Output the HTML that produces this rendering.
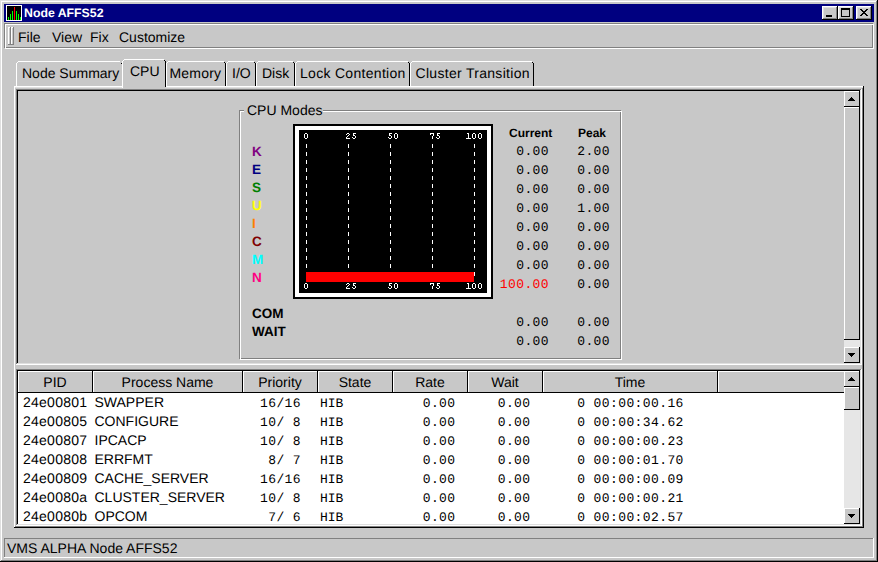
<!DOCTYPE html>
<html><head><meta charset="utf-8"><title>Node AFFS52</title>
<style>html,body{margin:0;padding:0;background:#c8c8c8;overflow:hidden;width:878px;height:562px} svg{display:block}</style>
</head><body>
<svg width="878" height="562" viewBox="0 0 878 562" shape-rendering="crispEdges" text-rendering="geometricPrecision"><rect x="0" y="0" width="878" height="562" fill="#c8c8c8"/>
<rect x="0" y="0" width="878" height="1" fill="#dfdfdf"/>
<rect x="0" y="0" width="1" height="562" fill="#dfdfdf"/>
<rect x="1" y="1" width="876" height="1" fill="#ffffff"/>
<rect x="1" y="1" width="1" height="560" fill="#ffffff"/>
<rect x="0" y="561" width="878" height="1" fill="#000000"/>
<rect x="877" y="0" width="1" height="562" fill="#000000"/>
<rect x="1" y="560" width="876" height="1" fill="#808080"/>
<rect x="876" y="1" width="1" height="560" fill="#808080"/>
<rect x="4" y="4" width="870" height="18" fill="#000080"/>
<rect x="6" y="5" width="16" height="16" fill="#ffffff"/>
<rect x="7" y="6" width="14" height="14" fill="#000000"/>
<rect x="8" y="17" width="1" height="3" fill="#00ff00"/>
<rect x="10" y="14" width="1" height="6" fill="#00ff00"/>
<rect x="12" y="11" width="1" height="9" fill="#00ff00"/>
<rect x="14" y="7" width="1" height="13" fill="#ff0000"/>
<rect x="16" y="11" width="1" height="9" fill="#00ff00"/>
<rect x="18" y="14" width="1" height="6" fill="#00ff00"/>
<rect x="20" y="17" width="1" height="3" fill="#00ff00"/>
<text x="24" y="17" font-family="Liberation Sans" font-size="12.3" font-weight="bold" fill="#ffffff" text-anchor="start" xml:space="preserve">Node AFFS52</text>
<rect x="822" y="6" width="16" height="14" fill="#c8c8c8"/>
<rect x="822" y="6" width="16" height="1" fill="#ffffff"/>
<rect x="822" y="6" width="1" height="14" fill="#ffffff"/>
<rect x="822" y="19" width="16" height="1" fill="#000000"/>
<rect x="837" y="6" width="1" height="14" fill="#000000"/>
<rect x="823" y="7" width="14" height="1" fill="#dfdfdf"/>
<rect x="823" y="7" width="1" height="12" fill="#dfdfdf"/>
<rect x="823" y="18" width="14" height="1" fill="#808080"/>
<rect x="836" y="7" width="1" height="12" fill="#808080"/>
<rect x="838" y="6" width="16" height="14" fill="#c8c8c8"/>
<rect x="838" y="6" width="16" height="1" fill="#ffffff"/>
<rect x="838" y="6" width="1" height="14" fill="#ffffff"/>
<rect x="838" y="19" width="16" height="1" fill="#000000"/>
<rect x="853" y="6" width="1" height="14" fill="#000000"/>
<rect x="839" y="7" width="14" height="1" fill="#dfdfdf"/>
<rect x="839" y="7" width="1" height="12" fill="#dfdfdf"/>
<rect x="839" y="18" width="14" height="1" fill="#808080"/>
<rect x="852" y="7" width="1" height="12" fill="#808080"/>
<rect x="856" y="6" width="16" height="14" fill="#c8c8c8"/>
<rect x="856" y="6" width="16" height="1" fill="#ffffff"/>
<rect x="856" y="6" width="1" height="14" fill="#ffffff"/>
<rect x="856" y="19" width="16" height="1" fill="#000000"/>
<rect x="871" y="6" width="1" height="14" fill="#000000"/>
<rect x="857" y="7" width="14" height="1" fill="#dfdfdf"/>
<rect x="857" y="7" width="1" height="12" fill="#dfdfdf"/>
<rect x="857" y="18" width="14" height="1" fill="#808080"/>
<rect x="870" y="7" width="1" height="12" fill="#808080"/>
<rect x="826" y="15" width="6" height="2" fill="#000000"/>
<rect x="841" y="8" width="9" height="9" fill="#000000"/>
<rect x="842" y="10" width="7" height="6" fill="#c8c8c8"/>
<rect x="860" y="9" width="1" height="1" fill="#000000"/>
<rect x="861" y="9" width="1" height="1" fill="#000000"/>
<rect x="866" y="9" width="1" height="1" fill="#000000"/>
<rect x="867" y="9" width="1" height="1" fill="#000000"/>
<rect x="861" y="10" width="1" height="1" fill="#000000"/>
<rect x="862" y="10" width="1" height="1" fill="#000000"/>
<rect x="865" y="10" width="1" height="1" fill="#000000"/>
<rect x="866" y="10" width="1" height="1" fill="#000000"/>
<rect x="862" y="11" width="1" height="1" fill="#000000"/>
<rect x="863" y="11" width="1" height="1" fill="#000000"/>
<rect x="864" y="11" width="1" height="1" fill="#000000"/>
<rect x="865" y="11" width="1" height="1" fill="#000000"/>
<rect x="863" y="12" width="1" height="1" fill="#000000"/>
<rect x="864" y="12" width="1" height="1" fill="#000000"/>
<rect x="862" y="13" width="1" height="1" fill="#000000"/>
<rect x="863" y="13" width="1" height="1" fill="#000000"/>
<rect x="864" y="13" width="1" height="1" fill="#000000"/>
<rect x="865" y="13" width="1" height="1" fill="#000000"/>
<rect x="861" y="14" width="1" height="1" fill="#000000"/>
<rect x="862" y="14" width="1" height="1" fill="#000000"/>
<rect x="865" y="14" width="1" height="1" fill="#000000"/>
<rect x="866" y="14" width="1" height="1" fill="#000000"/>
<rect x="860" y="15" width="1" height="1" fill="#000000"/>
<rect x="861" y="15" width="1" height="1" fill="#000000"/>
<rect x="866" y="15" width="1" height="1" fill="#000000"/>
<rect x="867" y="15" width="1" height="1" fill="#000000"/>
<rect x="4" y="23" width="869" height="1" fill="#808080"/>
<rect x="4" y="23" width="1" height="25" fill="#808080"/>
<rect x="4" y="47" width="869" height="1" fill="#808080"/>
<rect x="872" y="23" width="1" height="25" fill="#808080"/>
<rect x="5" y="24" width="869" height="1" fill="#ffffff"/>
<rect x="5" y="24" width="1" height="25" fill="#ffffff"/>
<rect x="5" y="48" width="869" height="1" fill="#ffffff"/>
<rect x="873" y="24" width="1" height="25" fill="#ffffff"/>
<rect x="5" y="24" width="867" height="1" fill="#ffffff"/>
<rect x="4" y="23" width="869" height="1" fill="#808080"/>
<rect x="4" y="23" width="1" height="25" fill="#808080"/>
<rect x="4" y="47" width="869" height="1" fill="#808080"/>
<rect x="872" y="23" width="1" height="25" fill="#808080"/>
<rect x="5" y="24" width="869" height="1" fill="#ffffff"/>
<rect x="5" y="24" width="1" height="25" fill="#ffffff"/>
<rect x="5" y="48" width="869" height="1" fill="#ffffff"/>
<rect x="873" y="24" width="1" height="25" fill="#ffffff"/>
<rect x="8" y="27" width="3" height="1" fill="#ffffff"/>
<rect x="8" y="27" width="1" height="18" fill="#ffffff"/>
<rect x="8" y="44" width="3" height="1" fill="#808080"/>
<rect x="10" y="27" width="1" height="18" fill="#808080"/>
<rect x="11" y="27" width="3" height="1" fill="#ffffff"/>
<rect x="11" y="27" width="1" height="18" fill="#ffffff"/>
<rect x="11" y="44" width="3" height="1" fill="#808080"/>
<rect x="13" y="27" width="1" height="18" fill="#808080"/>
<text x="18" y="42" font-family="Liberation Sans" font-size="14" font-weight="normal" fill="#000" text-anchor="start" xml:space="preserve">File</text>
<text x="52" y="42" font-family="Liberation Sans" font-size="14" font-weight="normal" fill="#000" text-anchor="start" xml:space="preserve">View</text>
<text x="90" y="42" font-family="Liberation Sans" font-size="14" font-weight="normal" fill="#000" text-anchor="start" xml:space="preserve">Fix</text>
<text x="119" y="42" font-family="Liberation Sans" font-size="14" font-weight="normal" fill="#000" text-anchor="start" xml:space="preserve">Customize</text>
<rect x="14" y="86" width="850" height="442" fill="#c8c8c8"/>
<rect x="14" y="86" width="850" height="1" fill="#ffffff"/>
<rect x="14" y="86" width="1" height="442" fill="#ffffff"/>
<rect x="14" y="527" width="850" height="1" fill="#000000"/>
<rect x="863" y="86" width="1" height="442" fill="#000000"/>
<rect x="15" y="526" width="848" height="1" fill="#808080"/>
<rect x="862" y="87" width="1" height="440" fill="#808080"/>
<rect x="15" y="87" width="848" height="1" fill="#dfdfdf"/>
<rect x="16" y="61" width="106" height="25" fill="#c8c8c8"/>
<rect x="18" y="61" width="102" height="1" fill="#ffffff"/>
<rect x="16" y="63" width="1" height="23" fill="#ffffff"/>
<rect x="17" y="62" width="1" height="1" fill="#ffffff"/>
<rect x="121" y="63" width="1" height="23" fill="#000000"/>
<rect x="120" y="62" width="1" height="1" fill="#000000"/>
<text x="22" y="78" font-family="Liberation Sans" font-size="14" font-weight="normal" fill="#000" text-anchor="start" xml:space="preserve">Node Summary</text>
<rect x="166" y="61" width="60" height="25" fill="#c8c8c8"/>
<rect x="168" y="61" width="56" height="1" fill="#ffffff"/>
<rect x="166" y="63" width="1" height="23" fill="#ffffff"/>
<rect x="167" y="62" width="1" height="1" fill="#ffffff"/>
<rect x="225" y="63" width="1" height="23" fill="#000000"/>
<rect x="224" y="62" width="1" height="1" fill="#000000"/>
<text x="169.5" y="78" font-family="Liberation Sans" font-size="14" font-weight="normal" fill="#000" text-anchor="start" letter-spacing="0.2" xml:space="preserve">Memory</text>
<rect x="226" y="61" width="30" height="25" fill="#c8c8c8"/>
<rect x="228" y="61" width="26" height="1" fill="#ffffff"/>
<rect x="226" y="63" width="1" height="23" fill="#ffffff"/>
<rect x="227" y="62" width="1" height="1" fill="#ffffff"/>
<rect x="255" y="63" width="1" height="23" fill="#000000"/>
<rect x="254" y="62" width="1" height="1" fill="#000000"/>
<text x="232" y="78" font-family="Liberation Sans" font-size="14" font-weight="normal" fill="#000" text-anchor="start" xml:space="preserve">I/O</text>
<rect x="256" y="61" width="39" height="25" fill="#c8c8c8"/>
<rect x="258" y="61" width="35" height="1" fill="#ffffff"/>
<rect x="256" y="63" width="1" height="23" fill="#ffffff"/>
<rect x="257" y="62" width="1" height="1" fill="#ffffff"/>
<rect x="294" y="63" width="1" height="23" fill="#000000"/>
<rect x="293" y="62" width="1" height="1" fill="#000000"/>
<text x="262" y="78" font-family="Liberation Sans" font-size="14" font-weight="normal" fill="#000" text-anchor="start" xml:space="preserve">Disk</text>
<rect x="295" y="61" width="115" height="25" fill="#c8c8c8"/>
<rect x="297" y="61" width="111" height="1" fill="#ffffff"/>
<rect x="295" y="63" width="1" height="23" fill="#ffffff"/>
<rect x="296" y="62" width="1" height="1" fill="#ffffff"/>
<rect x="409" y="63" width="1" height="23" fill="#000000"/>
<rect x="408" y="62" width="1" height="1" fill="#000000"/>
<text x="300" y="78" font-family="Liberation Sans" font-size="14" font-weight="normal" fill="#000" text-anchor="start" letter-spacing="0.3" xml:space="preserve">Lock Contention</text>
<rect x="410" y="61" width="124" height="25" fill="#c8c8c8"/>
<rect x="412" y="61" width="120" height="1" fill="#ffffff"/>
<rect x="410" y="63" width="1" height="23" fill="#ffffff"/>
<rect x="411" y="62" width="1" height="1" fill="#ffffff"/>
<rect x="533" y="63" width="1" height="23" fill="#000000"/>
<rect x="532" y="62" width="1" height="1" fill="#000000"/>
<text x="415.5" y="78" font-family="Liberation Sans" font-size="14" font-weight="normal" fill="#000" text-anchor="start" letter-spacing="0.3" xml:space="preserve">Cluster Transition</text>
<rect x="122" y="59" width="44" height="29" fill="#c8c8c8"/>
<rect x="124" y="59" width="40" height="1" fill="#ffffff"/>
<rect x="122" y="61" width="1" height="27" fill="#ffffff"/>
<rect x="123" y="60" width="1" height="1" fill="#ffffff"/>
<rect x="165" y="61" width="1" height="26" fill="#000000"/>
<rect x="164" y="60" width="1" height="1" fill="#000000"/>
<rect x="121" y="62" width="1" height="24" fill="#c8c8c8"/>
<rect x="120" y="62" width="1" height="1" fill="#c8c8c8"/>
<rect x="121" y="63" width="1" height="1" fill="#000000"/>
<text x="130" y="76" font-family="Liberation Sans" font-size="14" font-weight="normal" fill="#000" text-anchor="start" xml:space="preserve">CPU</text>
<rect x="16" y="89" width="846" height="1" fill="#808080"/>
<rect x="16" y="89" width="1" height="276" fill="#808080"/>
<rect x="16" y="364" width="846" height="1" fill="#ffffff"/>
<rect x="861" y="89" width="1" height="276" fill="#ffffff"/>
<rect x="17" y="90" width="844" height="1" fill="#000000"/>
<rect x="17" y="90" width="1" height="274" fill="#000000"/>
<rect x="17" y="363" width="844" height="1" fill="#dfdfdf"/>
<rect x="860" y="90" width="1" height="274" fill="#dfdfdf"/>
<rect x="844" y="91" width="16" height="272" fill="#e6e6e6"/>
<rect x="844" y="91" width="16" height="16" fill="#c8c8c8"/>
<rect x="844" y="91" width="16" height="1" fill="#ffffff"/>
<rect x="844" y="91" width="1" height="16" fill="#ffffff"/>
<rect x="844" y="106" width="16" height="1" fill="#000000"/>
<rect x="859" y="91" width="1" height="16" fill="#000000"/>
<rect x="844" y="347" width="16" height="16" fill="#c8c8c8"/>
<rect x="844" y="347" width="16" height="1" fill="#ffffff"/>
<rect x="844" y="347" width="1" height="16" fill="#ffffff"/>
<rect x="844" y="362" width="16" height="1" fill="#000000"/>
<rect x="859" y="347" width="1" height="16" fill="#000000"/>
<rect x="844" y="107" width="16" height="233" fill="#c8c8c8"/>
<rect x="844" y="107" width="16" height="1" fill="#ffffff"/>
<rect x="844" y="107" width="1" height="233" fill="#ffffff"/>
<rect x="844" y="339" width="16" height="1" fill="#000000"/>
<rect x="859" y="107" width="1" height="233" fill="#000000"/>
<path d="M848 101 h7 l-3.5 -4 z" fill="#000"/>
<path d="M848 353 h7 l-3.5 4 z" fill="#000"/>
<rect x="239" y="110" width="382" height="1" fill="#808080"/>
<rect x="239" y="110" width="1" height="249" fill="#808080"/>
<rect x="239" y="358" width="382" height="1" fill="#808080"/>
<rect x="620" y="110" width="1" height="249" fill="#808080"/>
<rect x="240" y="111" width="382" height="1" fill="#ffffff"/>
<rect x="240" y="111" width="1" height="249" fill="#ffffff"/>
<rect x="240" y="359" width="382" height="1" fill="#ffffff"/>
<rect x="621" y="111" width="1" height="249" fill="#ffffff"/>
<rect x="244" y="100" width="79" height="14" fill="#c8c8c8"/>
<text x="247" y="115" font-family="Liberation Sans" font-size="14" font-weight="normal" fill="#000" text-anchor="start" xml:space="preserve">CPU Modes</text>
<rect x="293" y="124" width="200" height="175" fill="#000000"/>
<rect x="295" y="126" width="196" height="171" fill="#ffffff"/>
<rect x="299" y="130" width="188" height="163" fill="#000000"/>
<rect x="306" y="144" width="1" height="4" fill="#ffffff"/>
<rect x="306" y="152" width="1" height="4" fill="#ffffff"/>
<rect x="306" y="160" width="1" height="4" fill="#ffffff"/>
<rect x="306" y="168" width="1" height="4" fill="#ffffff"/>
<rect x="306" y="176" width="1" height="4" fill="#ffffff"/>
<rect x="306" y="184" width="1" height="4" fill="#ffffff"/>
<rect x="306" y="192" width="1" height="4" fill="#ffffff"/>
<rect x="306" y="200" width="1" height="4" fill="#ffffff"/>
<rect x="306" y="208" width="1" height="4" fill="#ffffff"/>
<rect x="306" y="216" width="1" height="4" fill="#ffffff"/>
<rect x="306" y="224" width="1" height="4" fill="#ffffff"/>
<rect x="306" y="232" width="1" height="4" fill="#ffffff"/>
<rect x="306" y="240" width="1" height="4" fill="#ffffff"/>
<rect x="306" y="248" width="1" height="4" fill="#ffffff"/>
<rect x="306" y="256" width="1" height="4" fill="#ffffff"/>
<rect x="306" y="264" width="1" height="4" fill="#ffffff"/>
<rect x="306" y="272" width="1" height="4" fill="#ffffff"/>
<rect x="348" y="144" width="1" height="4" fill="#ffffff"/>
<rect x="348" y="152" width="1" height="4" fill="#ffffff"/>
<rect x="348" y="160" width="1" height="4" fill="#ffffff"/>
<rect x="348" y="168" width="1" height="4" fill="#ffffff"/>
<rect x="348" y="176" width="1" height="4" fill="#ffffff"/>
<rect x="348" y="184" width="1" height="4" fill="#ffffff"/>
<rect x="348" y="192" width="1" height="4" fill="#ffffff"/>
<rect x="348" y="200" width="1" height="4" fill="#ffffff"/>
<rect x="348" y="208" width="1" height="4" fill="#ffffff"/>
<rect x="348" y="216" width="1" height="4" fill="#ffffff"/>
<rect x="348" y="224" width="1" height="4" fill="#ffffff"/>
<rect x="348" y="232" width="1" height="4" fill="#ffffff"/>
<rect x="348" y="240" width="1" height="4" fill="#ffffff"/>
<rect x="348" y="248" width="1" height="4" fill="#ffffff"/>
<rect x="348" y="256" width="1" height="4" fill="#ffffff"/>
<rect x="348" y="264" width="1" height="4" fill="#ffffff"/>
<rect x="348" y="272" width="1" height="4" fill="#ffffff"/>
<rect x="390" y="144" width="1" height="4" fill="#ffffff"/>
<rect x="390" y="152" width="1" height="4" fill="#ffffff"/>
<rect x="390" y="160" width="1" height="4" fill="#ffffff"/>
<rect x="390" y="168" width="1" height="4" fill="#ffffff"/>
<rect x="390" y="176" width="1" height="4" fill="#ffffff"/>
<rect x="390" y="184" width="1" height="4" fill="#ffffff"/>
<rect x="390" y="192" width="1" height="4" fill="#ffffff"/>
<rect x="390" y="200" width="1" height="4" fill="#ffffff"/>
<rect x="390" y="208" width="1" height="4" fill="#ffffff"/>
<rect x="390" y="216" width="1" height="4" fill="#ffffff"/>
<rect x="390" y="224" width="1" height="4" fill="#ffffff"/>
<rect x="390" y="232" width="1" height="4" fill="#ffffff"/>
<rect x="390" y="240" width="1" height="4" fill="#ffffff"/>
<rect x="390" y="248" width="1" height="4" fill="#ffffff"/>
<rect x="390" y="256" width="1" height="4" fill="#ffffff"/>
<rect x="390" y="264" width="1" height="4" fill="#ffffff"/>
<rect x="390" y="272" width="1" height="4" fill="#ffffff"/>
<rect x="432" y="144" width="1" height="4" fill="#ffffff"/>
<rect x="432" y="152" width="1" height="4" fill="#ffffff"/>
<rect x="432" y="160" width="1" height="4" fill="#ffffff"/>
<rect x="432" y="168" width="1" height="4" fill="#ffffff"/>
<rect x="432" y="176" width="1" height="4" fill="#ffffff"/>
<rect x="432" y="184" width="1" height="4" fill="#ffffff"/>
<rect x="432" y="192" width="1" height="4" fill="#ffffff"/>
<rect x="432" y="200" width="1" height="4" fill="#ffffff"/>
<rect x="432" y="208" width="1" height="4" fill="#ffffff"/>
<rect x="432" y="216" width="1" height="4" fill="#ffffff"/>
<rect x="432" y="224" width="1" height="4" fill="#ffffff"/>
<rect x="432" y="232" width="1" height="4" fill="#ffffff"/>
<rect x="432" y="240" width="1" height="4" fill="#ffffff"/>
<rect x="432" y="248" width="1" height="4" fill="#ffffff"/>
<rect x="432" y="256" width="1" height="4" fill="#ffffff"/>
<rect x="432" y="264" width="1" height="4" fill="#ffffff"/>
<rect x="432" y="272" width="1" height="4" fill="#ffffff"/>
<rect x="474" y="144" width="1" height="4" fill="#ffffff"/>
<rect x="474" y="152" width="1" height="4" fill="#ffffff"/>
<rect x="474" y="160" width="1" height="4" fill="#ffffff"/>
<rect x="474" y="168" width="1" height="4" fill="#ffffff"/>
<rect x="474" y="176" width="1" height="4" fill="#ffffff"/>
<rect x="474" y="184" width="1" height="4" fill="#ffffff"/>
<rect x="474" y="192" width="1" height="4" fill="#ffffff"/>
<rect x="474" y="200" width="1" height="4" fill="#ffffff"/>
<rect x="474" y="208" width="1" height="4" fill="#ffffff"/>
<rect x="474" y="216" width="1" height="4" fill="#ffffff"/>
<rect x="474" y="224" width="1" height="4" fill="#ffffff"/>
<rect x="474" y="232" width="1" height="4" fill="#ffffff"/>
<rect x="474" y="240" width="1" height="4" fill="#ffffff"/>
<rect x="474" y="248" width="1" height="4" fill="#ffffff"/>
<rect x="474" y="256" width="1" height="4" fill="#ffffff"/>
<rect x="474" y="264" width="1" height="4" fill="#ffffff"/>
<rect x="474" y="272" width="1" height="4" fill="#ffffff"/>
<rect x="306" y="272" width="168" height="10" fill="#ff0000"/>
<rect x="305" y="133" width="2" height="1" fill="#ffffff"/>
<rect x="304" y="134" width="1" height="1" fill="#ffffff"/>
<rect x="307" y="134" width="1" height="1" fill="#ffffff"/>
<rect x="304" y="135" width="1" height="1" fill="#ffffff"/>
<rect x="307" y="135" width="1" height="1" fill="#ffffff"/>
<rect x="304" y="136" width="1" height="1" fill="#ffffff"/>
<rect x="307" y="136" width="1" height="1" fill="#ffffff"/>
<rect x="304" y="137" width="1" height="1" fill="#ffffff"/>
<rect x="307" y="137" width="1" height="1" fill="#ffffff"/>
<rect x="305" y="138" width="2" height="1" fill="#ffffff"/>
<rect x="305" y="283" width="2" height="1" fill="#ffffff"/>
<rect x="304" y="284" width="1" height="1" fill="#ffffff"/>
<rect x="307" y="284" width="1" height="1" fill="#ffffff"/>
<rect x="304" y="285" width="1" height="1" fill="#ffffff"/>
<rect x="307" y="285" width="1" height="1" fill="#ffffff"/>
<rect x="304" y="286" width="1" height="1" fill="#ffffff"/>
<rect x="307" y="286" width="1" height="1" fill="#ffffff"/>
<rect x="304" y="287" width="1" height="1" fill="#ffffff"/>
<rect x="307" y="287" width="1" height="1" fill="#ffffff"/>
<rect x="305" y="288" width="2" height="1" fill="#ffffff"/>
<rect x="347" y="133" width="2" height="1" fill="#ffffff"/>
<rect x="346" y="134" width="1" height="1" fill="#ffffff"/>
<rect x="349" y="134" width="1" height="1" fill="#ffffff"/>
<rect x="348" y="135" width="1" height="1" fill="#ffffff"/>
<rect x="347" y="136" width="1" height="1" fill="#ffffff"/>
<rect x="346" y="137" width="1" height="1" fill="#ffffff"/>
<rect x="346" y="138" width="4" height="1" fill="#ffffff"/>
<rect x="353" y="133" width="3" height="1" fill="#ffffff"/>
<rect x="353" y="134" width="1" height="1" fill="#ffffff"/>
<rect x="353" y="135" width="2" height="1" fill="#ffffff"/>
<rect x="355" y="136" width="1" height="1" fill="#ffffff"/>
<rect x="352" y="137" width="1" height="1" fill="#ffffff"/>
<rect x="355" y="137" width="1" height="1" fill="#ffffff"/>
<rect x="353" y="138" width="2" height="1" fill="#ffffff"/>
<rect x="347" y="283" width="2" height="1" fill="#ffffff"/>
<rect x="346" y="284" width="1" height="1" fill="#ffffff"/>
<rect x="349" y="284" width="1" height="1" fill="#ffffff"/>
<rect x="348" y="285" width="1" height="1" fill="#ffffff"/>
<rect x="347" y="286" width="1" height="1" fill="#ffffff"/>
<rect x="346" y="287" width="1" height="1" fill="#ffffff"/>
<rect x="346" y="288" width="4" height="1" fill="#ffffff"/>
<rect x="353" y="283" width="3" height="1" fill="#ffffff"/>
<rect x="353" y="284" width="1" height="1" fill="#ffffff"/>
<rect x="353" y="285" width="2" height="1" fill="#ffffff"/>
<rect x="355" y="286" width="1" height="1" fill="#ffffff"/>
<rect x="352" y="287" width="1" height="1" fill="#ffffff"/>
<rect x="355" y="287" width="1" height="1" fill="#ffffff"/>
<rect x="353" y="288" width="2" height="1" fill="#ffffff"/>
<rect x="389" y="133" width="3" height="1" fill="#ffffff"/>
<rect x="389" y="134" width="1" height="1" fill="#ffffff"/>
<rect x="389" y="135" width="2" height="1" fill="#ffffff"/>
<rect x="391" y="136" width="1" height="1" fill="#ffffff"/>
<rect x="388" y="137" width="1" height="1" fill="#ffffff"/>
<rect x="391" y="137" width="1" height="1" fill="#ffffff"/>
<rect x="389" y="138" width="2" height="1" fill="#ffffff"/>
<rect x="395" y="133" width="2" height="1" fill="#ffffff"/>
<rect x="394" y="134" width="1" height="1" fill="#ffffff"/>
<rect x="397" y="134" width="1" height="1" fill="#ffffff"/>
<rect x="394" y="135" width="1" height="1" fill="#ffffff"/>
<rect x="397" y="135" width="1" height="1" fill="#ffffff"/>
<rect x="394" y="136" width="1" height="1" fill="#ffffff"/>
<rect x="397" y="136" width="1" height="1" fill="#ffffff"/>
<rect x="394" y="137" width="1" height="1" fill="#ffffff"/>
<rect x="397" y="137" width="1" height="1" fill="#ffffff"/>
<rect x="395" y="138" width="2" height="1" fill="#ffffff"/>
<rect x="389" y="283" width="3" height="1" fill="#ffffff"/>
<rect x="389" y="284" width="1" height="1" fill="#ffffff"/>
<rect x="389" y="285" width="2" height="1" fill="#ffffff"/>
<rect x="391" y="286" width="1" height="1" fill="#ffffff"/>
<rect x="388" y="287" width="1" height="1" fill="#ffffff"/>
<rect x="391" y="287" width="1" height="1" fill="#ffffff"/>
<rect x="389" y="288" width="2" height="1" fill="#ffffff"/>
<rect x="395" y="283" width="2" height="1" fill="#ffffff"/>
<rect x="394" y="284" width="1" height="1" fill="#ffffff"/>
<rect x="397" y="284" width="1" height="1" fill="#ffffff"/>
<rect x="394" y="285" width="1" height="1" fill="#ffffff"/>
<rect x="397" y="285" width="1" height="1" fill="#ffffff"/>
<rect x="394" y="286" width="1" height="1" fill="#ffffff"/>
<rect x="397" y="286" width="1" height="1" fill="#ffffff"/>
<rect x="394" y="287" width="1" height="1" fill="#ffffff"/>
<rect x="397" y="287" width="1" height="1" fill="#ffffff"/>
<rect x="395" y="288" width="2" height="1" fill="#ffffff"/>
<rect x="430" y="133" width="4" height="1" fill="#ffffff"/>
<rect x="430" y="134" width="1" height="1" fill="#ffffff"/>
<rect x="433" y="134" width="1" height="1" fill="#ffffff"/>
<rect x="433" y="135" width="1" height="1" fill="#ffffff"/>
<rect x="432" y="136" width="1" height="1" fill="#ffffff"/>
<rect x="432" y="137" width="1" height="1" fill="#ffffff"/>
<rect x="432" y="138" width="1" height="1" fill="#ffffff"/>
<rect x="437" y="133" width="3" height="1" fill="#ffffff"/>
<rect x="437" y="134" width="1" height="1" fill="#ffffff"/>
<rect x="437" y="135" width="2" height="1" fill="#ffffff"/>
<rect x="439" y="136" width="1" height="1" fill="#ffffff"/>
<rect x="436" y="137" width="1" height="1" fill="#ffffff"/>
<rect x="439" y="137" width="1" height="1" fill="#ffffff"/>
<rect x="437" y="138" width="2" height="1" fill="#ffffff"/>
<rect x="430" y="283" width="4" height="1" fill="#ffffff"/>
<rect x="430" y="284" width="1" height="1" fill="#ffffff"/>
<rect x="433" y="284" width="1" height="1" fill="#ffffff"/>
<rect x="433" y="285" width="1" height="1" fill="#ffffff"/>
<rect x="432" y="286" width="1" height="1" fill="#ffffff"/>
<rect x="432" y="287" width="1" height="1" fill="#ffffff"/>
<rect x="432" y="288" width="1" height="1" fill="#ffffff"/>
<rect x="437" y="283" width="3" height="1" fill="#ffffff"/>
<rect x="437" y="284" width="1" height="1" fill="#ffffff"/>
<rect x="437" y="285" width="2" height="1" fill="#ffffff"/>
<rect x="439" y="286" width="1" height="1" fill="#ffffff"/>
<rect x="436" y="287" width="1" height="1" fill="#ffffff"/>
<rect x="439" y="287" width="1" height="1" fill="#ffffff"/>
<rect x="437" y="288" width="2" height="1" fill="#ffffff"/>
<rect x="467" y="133" width="2" height="1" fill="#ffffff"/>
<rect x="468" y="134" width="1" height="1" fill="#ffffff"/>
<rect x="468" y="135" width="1" height="1" fill="#ffffff"/>
<rect x="468" y="136" width="1" height="1" fill="#ffffff"/>
<rect x="468" y="137" width="1" height="1" fill="#ffffff"/>
<rect x="466" y="138" width="5" height="1" fill="#ffffff"/>
<rect x="473" y="133" width="2" height="1" fill="#ffffff"/>
<rect x="472" y="134" width="1" height="1" fill="#ffffff"/>
<rect x="475" y="134" width="1" height="1" fill="#ffffff"/>
<rect x="472" y="135" width="1" height="1" fill="#ffffff"/>
<rect x="475" y="135" width="1" height="1" fill="#ffffff"/>
<rect x="472" y="136" width="1" height="1" fill="#ffffff"/>
<rect x="475" y="136" width="1" height="1" fill="#ffffff"/>
<rect x="472" y="137" width="1" height="1" fill="#ffffff"/>
<rect x="475" y="137" width="1" height="1" fill="#ffffff"/>
<rect x="473" y="138" width="2" height="1" fill="#ffffff"/>
<rect x="479" y="133" width="2" height="1" fill="#ffffff"/>
<rect x="478" y="134" width="1" height="1" fill="#ffffff"/>
<rect x="481" y="134" width="1" height="1" fill="#ffffff"/>
<rect x="478" y="135" width="1" height="1" fill="#ffffff"/>
<rect x="481" y="135" width="1" height="1" fill="#ffffff"/>
<rect x="478" y="136" width="1" height="1" fill="#ffffff"/>
<rect x="481" y="136" width="1" height="1" fill="#ffffff"/>
<rect x="478" y="137" width="1" height="1" fill="#ffffff"/>
<rect x="481" y="137" width="1" height="1" fill="#ffffff"/>
<rect x="479" y="138" width="2" height="1" fill="#ffffff"/>
<rect x="467" y="283" width="2" height="1" fill="#ffffff"/>
<rect x="468" y="284" width="1" height="1" fill="#ffffff"/>
<rect x="468" y="285" width="1" height="1" fill="#ffffff"/>
<rect x="468" y="286" width="1" height="1" fill="#ffffff"/>
<rect x="468" y="287" width="1" height="1" fill="#ffffff"/>
<rect x="466" y="288" width="5" height="1" fill="#ffffff"/>
<rect x="473" y="283" width="2" height="1" fill="#ffffff"/>
<rect x="472" y="284" width="1" height="1" fill="#ffffff"/>
<rect x="475" y="284" width="1" height="1" fill="#ffffff"/>
<rect x="472" y="285" width="1" height="1" fill="#ffffff"/>
<rect x="475" y="285" width="1" height="1" fill="#ffffff"/>
<rect x="472" y="286" width="1" height="1" fill="#ffffff"/>
<rect x="475" y="286" width="1" height="1" fill="#ffffff"/>
<rect x="472" y="287" width="1" height="1" fill="#ffffff"/>
<rect x="475" y="287" width="1" height="1" fill="#ffffff"/>
<rect x="473" y="288" width="2" height="1" fill="#ffffff"/>
<rect x="479" y="283" width="2" height="1" fill="#ffffff"/>
<rect x="478" y="284" width="1" height="1" fill="#ffffff"/>
<rect x="481" y="284" width="1" height="1" fill="#ffffff"/>
<rect x="478" y="285" width="1" height="1" fill="#ffffff"/>
<rect x="481" y="285" width="1" height="1" fill="#ffffff"/>
<rect x="478" y="286" width="1" height="1" fill="#ffffff"/>
<rect x="481" y="286" width="1" height="1" fill="#ffffff"/>
<rect x="478" y="287" width="1" height="1" fill="#ffffff"/>
<rect x="481" y="287" width="1" height="1" fill="#ffffff"/>
<rect x="479" y="288" width="2" height="1" fill="#ffffff"/>
<text x="252" y="156" font-family="Liberation Sans" font-size="13.5" font-weight="bold" fill="#800080" text-anchor="start" xml:space="preserve">K</text>
<text x="252" y="174" font-family="Liberation Sans" font-size="13.5" font-weight="bold" fill="#000080" text-anchor="start" xml:space="preserve">E</text>
<text x="252" y="192" font-family="Liberation Sans" font-size="13.5" font-weight="bold" fill="#008000" text-anchor="start" xml:space="preserve">S</text>
<text x="252" y="210" font-family="Liberation Sans" font-size="13.5" font-weight="bold" fill="#ffff00" text-anchor="start" xml:space="preserve">U</text>
<text x="252" y="228" font-family="Liberation Sans" font-size="13.5" font-weight="bold" fill="#ff8000" text-anchor="start" xml:space="preserve">I</text>
<text x="252" y="246" font-family="Liberation Sans" font-size="13.5" font-weight="bold" fill="#800000" text-anchor="start" xml:space="preserve">C</text>
<text x="252" y="264" font-family="Liberation Sans" font-size="13.5" font-weight="bold" fill="#00ffff" text-anchor="start" xml:space="preserve">M</text>
<text x="252" y="282" font-family="Liberation Sans" font-size="13.5" font-weight="bold" fill="#ff0080" text-anchor="start" xml:space="preserve">N</text>
<text x="509" y="137" font-family="Liberation Sans" font-size="12" font-weight="bold" fill="#000" text-anchor="start" xml:space="preserve">Current</text>
<text x="578" y="137" font-family="Liberation Sans" font-size="12" font-weight="bold" fill="#000" text-anchor="start" xml:space="preserve">Peak</text>
<text x="549" y="155" font-family="Liberation Mono" font-size="13" font-weight="normal" fill="#000" text-anchor="end" letter-spacing="0.4" xml:space="preserve">0.00</text>
<text x="610" y="155" font-family="Liberation Mono" font-size="13" font-weight="normal" fill="#000" text-anchor="end" letter-spacing="0.4" xml:space="preserve">2.00</text>
<text x="549" y="174" font-family="Liberation Mono" font-size="13" font-weight="normal" fill="#000" text-anchor="end" letter-spacing="0.4" xml:space="preserve">0.00</text>
<text x="610" y="174" font-family="Liberation Mono" font-size="13" font-weight="normal" fill="#000" text-anchor="end" letter-spacing="0.4" xml:space="preserve">0.00</text>
<text x="549" y="193" font-family="Liberation Mono" font-size="13" font-weight="normal" fill="#000" text-anchor="end" letter-spacing="0.4" xml:space="preserve">0.00</text>
<text x="610" y="193" font-family="Liberation Mono" font-size="13" font-weight="normal" fill="#000" text-anchor="end" letter-spacing="0.4" xml:space="preserve">0.00</text>
<text x="549" y="212" font-family="Liberation Mono" font-size="13" font-weight="normal" fill="#000" text-anchor="end" letter-spacing="0.4" xml:space="preserve">0.00</text>
<text x="610" y="212" font-family="Liberation Mono" font-size="13" font-weight="normal" fill="#000" text-anchor="end" letter-spacing="0.4" xml:space="preserve">1.00</text>
<text x="549" y="231" font-family="Liberation Mono" font-size="13" font-weight="normal" fill="#000" text-anchor="end" letter-spacing="0.4" xml:space="preserve">0.00</text>
<text x="610" y="231" font-family="Liberation Mono" font-size="13" font-weight="normal" fill="#000" text-anchor="end" letter-spacing="0.4" xml:space="preserve">0.00</text>
<text x="549" y="250" font-family="Liberation Mono" font-size="13" font-weight="normal" fill="#000" text-anchor="end" letter-spacing="0.4" xml:space="preserve">0.00</text>
<text x="610" y="250" font-family="Liberation Mono" font-size="13" font-weight="normal" fill="#000" text-anchor="end" letter-spacing="0.4" xml:space="preserve">0.00</text>
<text x="549" y="269" font-family="Liberation Mono" font-size="13" font-weight="normal" fill="#000" text-anchor="end" letter-spacing="0.4" xml:space="preserve">0.00</text>
<text x="610" y="269" font-family="Liberation Mono" font-size="13" font-weight="normal" fill="#000" text-anchor="end" letter-spacing="0.4" xml:space="preserve">0.00</text>
<text x="549" y="288" font-family="Liberation Mono" font-size="13" font-weight="normal" fill="#ff0000" text-anchor="end" letter-spacing="0.4" xml:space="preserve">100.00</text>
<text x="610" y="288" font-family="Liberation Mono" font-size="13" font-weight="normal" fill="#000" text-anchor="end" letter-spacing="0.4" xml:space="preserve">0.00</text>
<text x="549" y="326" font-family="Liberation Mono" font-size="13" font-weight="normal" fill="#000" text-anchor="end" letter-spacing="0.4" xml:space="preserve">0.00</text>
<text x="610" y="326" font-family="Liberation Mono" font-size="13" font-weight="normal" fill="#000" text-anchor="end" letter-spacing="0.4" xml:space="preserve">0.00</text>
<text x="549" y="345" font-family="Liberation Mono" font-size="13" font-weight="normal" fill="#000" text-anchor="end" letter-spacing="0.4" xml:space="preserve">0.00</text>
<text x="610" y="345" font-family="Liberation Mono" font-size="13" font-weight="normal" fill="#000" text-anchor="end" letter-spacing="0.4" xml:space="preserve">0.00</text>
<text x="252" y="318" font-family="Liberation Sans" font-size="13.5" font-weight="bold" fill="#000" text-anchor="start" xml:space="preserve">COM</text>
<text x="252" y="336" font-family="Liberation Sans" font-size="13.5" font-weight="bold" fill="#000" text-anchor="start" xml:space="preserve">WAIT</text>
<rect x="16" y="369" width="846" height="1" fill="#808080"/>
<rect x="16" y="369" width="1" height="157" fill="#808080"/>
<rect x="16" y="525" width="846" height="1" fill="#ffffff"/>
<rect x="861" y="369" width="1" height="157" fill="#ffffff"/>
<rect x="17" y="370" width="844" height="1" fill="#000000"/>
<rect x="17" y="370" width="1" height="155" fill="#000000"/>
<rect x="17" y="524" width="844" height="1" fill="#dfdfdf"/>
<rect x="860" y="370" width="1" height="155" fill="#dfdfdf"/>
<rect x="18" y="371" width="826" height="153" fill="#ffffff"/>
<rect x="18" y="371" width="826" height="22" fill="#c8c8c8"/>
<rect x="18" y="371" width="75" height="1" fill="#ffffff"/>
<rect x="18" y="371" width="1" height="21" fill="#ffffff"/>
<rect x="92" y="371" width="1" height="22" fill="#000000"/>
<text x="55.0" y="387" font-family="Liberation Sans" font-size="14" font-weight="normal" fill="#000" text-anchor="middle" xml:space="preserve">PID</text>
<rect x="93" y="371" width="150" height="1" fill="#ffffff"/>
<rect x="93" y="371" width="1" height="21" fill="#ffffff"/>
<rect x="242" y="371" width="1" height="22" fill="#000000"/>
<text x="167.5" y="387" font-family="Liberation Sans" font-size="14" font-weight="normal" fill="#000" text-anchor="middle" xml:space="preserve">Process Name</text>
<rect x="243" y="371" width="75" height="1" fill="#ffffff"/>
<rect x="243" y="371" width="1" height="21" fill="#ffffff"/>
<rect x="317" y="371" width="1" height="22" fill="#000000"/>
<text x="280.0" y="387" font-family="Liberation Sans" font-size="14" font-weight="normal" fill="#000" text-anchor="middle" xml:space="preserve">Priority</text>
<rect x="318" y="371" width="75" height="1" fill="#ffffff"/>
<rect x="318" y="371" width="1" height="21" fill="#ffffff"/>
<rect x="392" y="371" width="1" height="22" fill="#000000"/>
<text x="355.0" y="387" font-family="Liberation Sans" font-size="14" font-weight="normal" fill="#000" text-anchor="middle" xml:space="preserve">State</text>
<rect x="393" y="371" width="75" height="1" fill="#ffffff"/>
<rect x="393" y="371" width="1" height="21" fill="#ffffff"/>
<rect x="467" y="371" width="1" height="22" fill="#000000"/>
<text x="430.0" y="387" font-family="Liberation Sans" font-size="14" font-weight="normal" fill="#000" text-anchor="middle" xml:space="preserve">Rate</text>
<rect x="468" y="371" width="75" height="1" fill="#ffffff"/>
<rect x="468" y="371" width="1" height="21" fill="#ffffff"/>
<rect x="542" y="371" width="1" height="22" fill="#000000"/>
<text x="505.0" y="387" font-family="Liberation Sans" font-size="14" font-weight="normal" fill="#000" text-anchor="middle" xml:space="preserve">Wait</text>
<rect x="543" y="371" width="175" height="1" fill="#ffffff"/>
<rect x="543" y="371" width="1" height="21" fill="#ffffff"/>
<rect x="717" y="371" width="1" height="22" fill="#000000"/>
<text x="630.0" y="387" font-family="Liberation Sans" font-size="14" font-weight="normal" fill="#000" text-anchor="middle" xml:space="preserve">Time</text>
<rect x="718" y="371" width="126" height="1" fill="#ffffff"/>
<rect x="718" y="371" width="1" height="21" fill="#ffffff"/>
<rect x="18" y="392" width="826" height="1" fill="#000000"/>
<clipPath id="tc"><rect x="18" y="393" width="826" height="131"/></clipPath><g clip-path="url(#tc)">
<text x="23" y="407" font-family="Liberation Sans" font-size="14" font-weight="normal" fill="#000" text-anchor="start" letter-spacing="0.25" xml:space="preserve">24e00801</text>
<text x="94.5" y="407" font-family="Liberation Sans" font-size="14" font-weight="normal" fill="#000" text-anchor="start" xml:space="preserve">SWAPPER</text>
<text x="280.5" y="407" font-family="Liberation Mono" font-size="13" font-weight="normal" fill="#000" text-anchor="middle" letter-spacing="0.4" xml:space="preserve">16/16</text>
<text x="320" y="407" font-family="Liberation Mono" font-size="13" font-weight="normal" fill="#000" text-anchor="start" xml:space="preserve">HIB</text>
<text x="455.5" y="407" font-family="Liberation Mono" font-size="13" font-weight="normal" fill="#000" text-anchor="end" letter-spacing="0.4" xml:space="preserve">0.00</text>
<text x="530.5" y="407" font-family="Liberation Mono" font-size="13" font-weight="normal" fill="#000" text-anchor="end" letter-spacing="0.4" xml:space="preserve">0.00</text>
<text x="630.5" y="407" font-family="Liberation Mono" font-size="13" font-weight="normal" fill="#000" text-anchor="middle" letter-spacing="0.4" xml:space="preserve">0 00:00:00.16</text>
<text x="23" y="426" font-family="Liberation Sans" font-size="14" font-weight="normal" fill="#000" text-anchor="start" letter-spacing="0.25" xml:space="preserve">24e00805</text>
<text x="94.5" y="426" font-family="Liberation Sans" font-size="14" font-weight="normal" fill="#000" text-anchor="start" xml:space="preserve">CONFIGURE</text>
<text x="280.5" y="426" font-family="Liberation Mono" font-size="13" font-weight="normal" fill="#000" text-anchor="middle" letter-spacing="0.4" xml:space="preserve">10/ 8</text>
<text x="320" y="426" font-family="Liberation Mono" font-size="13" font-weight="normal" fill="#000" text-anchor="start" xml:space="preserve">HIB</text>
<text x="455.5" y="426" font-family="Liberation Mono" font-size="13" font-weight="normal" fill="#000" text-anchor="end" letter-spacing="0.4" xml:space="preserve">0.00</text>
<text x="530.5" y="426" font-family="Liberation Mono" font-size="13" font-weight="normal" fill="#000" text-anchor="end" letter-spacing="0.4" xml:space="preserve">0.00</text>
<text x="630.5" y="426" font-family="Liberation Mono" font-size="13" font-weight="normal" fill="#000" text-anchor="middle" letter-spacing="0.4" xml:space="preserve">0 00:00:34.62</text>
<text x="23" y="445" font-family="Liberation Sans" font-size="14" font-weight="normal" fill="#000" text-anchor="start" letter-spacing="0.25" xml:space="preserve">24e00807</text>
<text x="94.5" y="445" font-family="Liberation Sans" font-size="14" font-weight="normal" fill="#000" text-anchor="start" xml:space="preserve">IPCACP</text>
<text x="280.5" y="445" font-family="Liberation Mono" font-size="13" font-weight="normal" fill="#000" text-anchor="middle" letter-spacing="0.4" xml:space="preserve">10/ 8</text>
<text x="320" y="445" font-family="Liberation Mono" font-size="13" font-weight="normal" fill="#000" text-anchor="start" xml:space="preserve">HIB</text>
<text x="455.5" y="445" font-family="Liberation Mono" font-size="13" font-weight="normal" fill="#000" text-anchor="end" letter-spacing="0.4" xml:space="preserve">0.00</text>
<text x="530.5" y="445" font-family="Liberation Mono" font-size="13" font-weight="normal" fill="#000" text-anchor="end" letter-spacing="0.4" xml:space="preserve">0.00</text>
<text x="630.5" y="445" font-family="Liberation Mono" font-size="13" font-weight="normal" fill="#000" text-anchor="middle" letter-spacing="0.4" xml:space="preserve">0 00:00:00.23</text>
<text x="23" y="464" font-family="Liberation Sans" font-size="14" font-weight="normal" fill="#000" text-anchor="start" letter-spacing="0.25" xml:space="preserve">24e00808</text>
<text x="94.5" y="464" font-family="Liberation Sans" font-size="14" font-weight="normal" fill="#000" text-anchor="start" xml:space="preserve">ERRFMT</text>
<text x="280.5" y="464" font-family="Liberation Mono" font-size="13" font-weight="normal" fill="#000" text-anchor="middle" letter-spacing="0.4" xml:space="preserve"> 8/ 7</text>
<text x="320" y="464" font-family="Liberation Mono" font-size="13" font-weight="normal" fill="#000" text-anchor="start" xml:space="preserve">HIB</text>
<text x="455.5" y="464" font-family="Liberation Mono" font-size="13" font-weight="normal" fill="#000" text-anchor="end" letter-spacing="0.4" xml:space="preserve">0.00</text>
<text x="530.5" y="464" font-family="Liberation Mono" font-size="13" font-weight="normal" fill="#000" text-anchor="end" letter-spacing="0.4" xml:space="preserve">0.00</text>
<text x="630.5" y="464" font-family="Liberation Mono" font-size="13" font-weight="normal" fill="#000" text-anchor="middle" letter-spacing="0.4" xml:space="preserve">0 00:00:01.70</text>
<text x="23" y="483" font-family="Liberation Sans" font-size="14" font-weight="normal" fill="#000" text-anchor="start" letter-spacing="0.25" xml:space="preserve">24e00809</text>
<text x="94.5" y="483" font-family="Liberation Sans" font-size="14" font-weight="normal" fill="#000" text-anchor="start" xml:space="preserve">CACHE_SERVER</text>
<text x="280.5" y="483" font-family="Liberation Mono" font-size="13" font-weight="normal" fill="#000" text-anchor="middle" letter-spacing="0.4" xml:space="preserve">16/16</text>
<text x="320" y="483" font-family="Liberation Mono" font-size="13" font-weight="normal" fill="#000" text-anchor="start" xml:space="preserve">HIB</text>
<text x="455.5" y="483" font-family="Liberation Mono" font-size="13" font-weight="normal" fill="#000" text-anchor="end" letter-spacing="0.4" xml:space="preserve">0.00</text>
<text x="530.5" y="483" font-family="Liberation Mono" font-size="13" font-weight="normal" fill="#000" text-anchor="end" letter-spacing="0.4" xml:space="preserve">0.00</text>
<text x="630.5" y="483" font-family="Liberation Mono" font-size="13" font-weight="normal" fill="#000" text-anchor="middle" letter-spacing="0.4" xml:space="preserve">0 00:00:00.09</text>
<text x="23" y="502" font-family="Liberation Sans" font-size="14" font-weight="normal" fill="#000" text-anchor="start" letter-spacing="0.25" xml:space="preserve">24e0080a</text>
<text x="94.5" y="502" font-family="Liberation Sans" font-size="14" font-weight="normal" fill="#000" text-anchor="start" xml:space="preserve">CLUSTER_SERVER</text>
<text x="280.5" y="502" font-family="Liberation Mono" font-size="13" font-weight="normal" fill="#000" text-anchor="middle" letter-spacing="0.4" xml:space="preserve">10/ 8</text>
<text x="320" y="502" font-family="Liberation Mono" font-size="13" font-weight="normal" fill="#000" text-anchor="start" xml:space="preserve">HIB</text>
<text x="455.5" y="502" font-family="Liberation Mono" font-size="13" font-weight="normal" fill="#000" text-anchor="end" letter-spacing="0.4" xml:space="preserve">0.00</text>
<text x="530.5" y="502" font-family="Liberation Mono" font-size="13" font-weight="normal" fill="#000" text-anchor="end" letter-spacing="0.4" xml:space="preserve">0.00</text>
<text x="630.5" y="502" font-family="Liberation Mono" font-size="13" font-weight="normal" fill="#000" text-anchor="middle" letter-spacing="0.4" xml:space="preserve">0 00:00:00.21</text>
<text x="23" y="521" font-family="Liberation Sans" font-size="14" font-weight="normal" fill="#000" text-anchor="start" letter-spacing="0.25" xml:space="preserve">24e0080b</text>
<text x="94.5" y="521" font-family="Liberation Sans" font-size="14" font-weight="normal" fill="#000" text-anchor="start" xml:space="preserve">OPCOM</text>
<text x="280.5" y="521" font-family="Liberation Mono" font-size="13" font-weight="normal" fill="#000" text-anchor="middle" letter-spacing="0.4" xml:space="preserve"> 7/ 6</text>
<text x="320" y="521" font-family="Liberation Mono" font-size="13" font-weight="normal" fill="#000" text-anchor="start" xml:space="preserve">HIB</text>
<text x="455.5" y="521" font-family="Liberation Mono" font-size="13" font-weight="normal" fill="#000" text-anchor="end" letter-spacing="0.4" xml:space="preserve">0.00</text>
<text x="530.5" y="521" font-family="Liberation Mono" font-size="13" font-weight="normal" fill="#000" text-anchor="end" letter-spacing="0.4" xml:space="preserve">0.00</text>
<text x="630.5" y="521" font-family="Liberation Mono" font-size="13" font-weight="normal" fill="#000" text-anchor="middle" letter-spacing="0.4" xml:space="preserve">0 00:00:02.57</text>
</g>
<rect x="844" y="371" width="16" height="153" fill="#e6e6e6"/>
<rect x="844" y="371" width="16" height="16" fill="#c8c8c8"/>
<rect x="844" y="371" width="16" height="1" fill="#ffffff"/>
<rect x="844" y="371" width="1" height="16" fill="#ffffff"/>
<rect x="844" y="386" width="16" height="1" fill="#000000"/>
<rect x="859" y="371" width="1" height="16" fill="#000000"/>
<rect x="844" y="508" width="16" height="16" fill="#c8c8c8"/>
<rect x="844" y="508" width="16" height="1" fill="#ffffff"/>
<rect x="844" y="508" width="1" height="16" fill="#ffffff"/>
<rect x="844" y="523" width="16" height="1" fill="#000000"/>
<rect x="859" y="508" width="1" height="16" fill="#000000"/>
<rect x="844" y="387" width="16" height="23" fill="#c8c8c8"/>
<rect x="844" y="387" width="16" height="1" fill="#ffffff"/>
<rect x="844" y="387" width="1" height="23" fill="#ffffff"/>
<rect x="844" y="409" width="16" height="1" fill="#000000"/>
<rect x="859" y="387" width="1" height="23" fill="#000000"/>
<path d="M848 381 h7 l-3.5 -4 z" fill="#000"/>
<path d="M848 514 h7 l-3.5 4 z" fill="#000"/>
<rect x="4" y="538" width="870" height="1" fill="#808080"/>
<rect x="4" y="538" width="1" height="20" fill="#808080"/>
<rect x="4" y="557" width="870" height="1" fill="#ffffff"/>
<rect x="873" y="538" width="1" height="20" fill="#ffffff"/>
<text x="7" y="553" font-family="Liberation Sans" font-size="14" font-weight="normal" fill="#000" text-anchor="start" xml:space="preserve">VMS ALPHA Node AFFS52</text></svg>
</body></html>
